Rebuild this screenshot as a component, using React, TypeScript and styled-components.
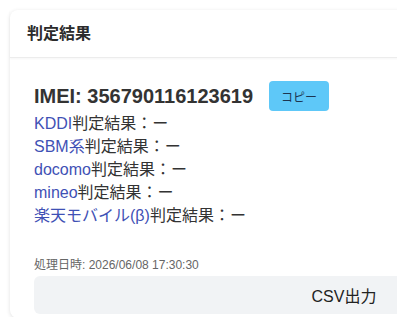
import React from "react";
import styled, { createGlobalStyle } from "styled-components";

const Global = createGlobalStyle`
  html, body { margin: 0; padding: 0; background: #fff; overflow: hidden; }
  body { font-family: "Liberation Sans", Arial, "Noto Sans CJK JP", sans-serif; color: #333; }
`;

const Page = styled.div`
  padding: 10px 0 0 10px;
  width: 100vw;
  height: 100vh;
  box-sizing: border-box;
  overflow: hidden;
`;

const Card = styled.section`
  width: 668px;
  background: #fff;
  border-radius: 8px;
  box-shadow: 0 1px 4px rgba(0, 0, 0, 0.12);
`;

const Header = styled.header`
  height: 48px;
  box-sizing: border-box;
  display: flex;
  align-items: center;
  padding: 0 17px 4px;
  border-bottom: 1px solid #ececec;
  box-shadow: 0 1px 2px rgba(0, 0, 0, 0.04);
`;

const Title = styled.h2`
  margin: 0;
  font-size: 16px;
  font-weight: 700;
  color: #2b2b2b;
`;

const Body = styled.div`
  padding: 23px 24px 4px;
`;

const ImeiRow = styled.div`
  display: flex;
  align-items: center;
  gap: 16px;
  height: 30px;
`;

const Imei = styled.span`
  font-size: 20px;
  font-weight: 700;
  color: #333;
`;

const CopyButton = styled.button`
  height: 30px;
  width: 60px;
  border: none;
  border-radius: 4px;
  background: #5ec8f8;
  color: #1c3550;
  font-size: 12px;
  font-family: "Noto Sans CJK JP", sans-serif;
  padding: 0;
`;

const ResultList = styled.div`
  margin-top: 1px;
`;

const ResultLine = styled.div`
  font-size: 16px;
  line-height: 23px;
  color: #333;
`;

const Carrier = styled.span`
  color: #3f51b5;
`;

const DateText = styled.div`
  margin-top: 30px;
  font-size: 12px;
  line-height: 16px;
  color: #666;
`;

const CsvButton = styled.button`
  margin-top: 3px;
  width: 620px;
  height: 38px;
  border: none;
  border-radius: 6px;
  background: #f1f3f5;
  color: #222;
  font-size: 16px;
  font-family: "Liberation Sans", Arial, "Noto Sans CJK JP", sans-serif;
`;

const carriers = ["KDDI", "SBM系", "docomo", "mineo", "楽天モバイル(β)"];

export default function App() {
  return (
    <>
      <Global />
      <Page>
        <Card>
          <Header>
            <Title>判定結果</Title>
          </Header>
          <Body>
            <ImeiRow>
              <Imei>IMEI: 356790116123619</Imei>
              <CopyButton>コピー</CopyButton>
            </ImeiRow>
            <ResultList>
              {carriers.map((c) => (
                <ResultLine key={c}>
                  <Carrier>{c}</Carrier>判定結果：ー
                </ResultLine>
              ))}
            </ResultList>
            <DateText>処理日時: 2026/06/08 17:30:30</DateText>
            <CsvButton>CSV出力</CsvButton>
          </Body>
        </Card>
      </Page>
    </>
  );
}
